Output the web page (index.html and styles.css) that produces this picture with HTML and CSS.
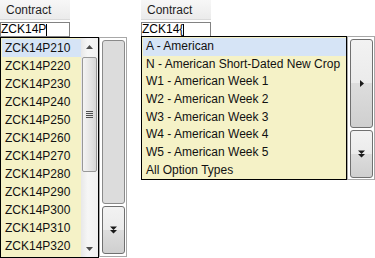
FILE: index.html
```html
<!DOCTYPE html>
<html lang="en">
<head>
  <meta charset="UTF-8" />
  <title>Contract picker</title>
  <link rel="stylesheet" href="styles.css">
</head>
<body>
  <div class="page">
    <div class="panel panel-left">
      <div class="hdr">Contract</div>
      <div class="field">ZCK14P<span class="caret"></span></div>
      <div class="drop">
        <div class="list list-tall">
          <div class="items">
            <div class="item sel">ZCK14P210</div>
            <div class="item">ZCK14P220</div>
            <div class="item">ZCK14P230</div>
            <div class="item">ZCK14P240</div>
            <div class="item">ZCK14P250</div>
            <div class="item">ZCK14P260</div>
            <div class="item">ZCK14P270</div>
            <div class="item">ZCK14P280</div>
            <div class="item">ZCK14P290</div>
            <div class="item">ZCK14P300</div>
            <div class="item">ZCK14P310</div>
            <div class="item">ZCK14P320</div>
          </div>
          <div class="vscroll">
            <div class="sb-arrow">
              <svg width="7" height="4" viewBox="0 0 7 4"><path d="M0 4 L3.5 0 L7 4Z" fill="#4d4d4d"/></svg>
            </div>
            <div class="sb-track">
              <div class="thumb"><span class="grip"></span></div>
            </div>
            <div class="sb-arrow">
              <svg width="7" height="4" viewBox="0 0 7 4"><path d="M0 0 L3.5 4 L7 0Z" fill="#4d4d4d"/></svg>
            </div>
          </div>
        </div>
        <div class="btns btns-tall">
          <div class="btn btn-flat btn-main"></div>
          <div class="btn btn-more">
            <svg width="7" height="8" viewBox="0 0 7 8"><path d="M0 0.5 H7 L3.5 4Z M0 4 H7 L3.5 7.5Z" fill="#1a1a1a"/></svg>
          </div>
        </div>
      </div>
    </div>

    <div class="panel panel-right">
      <div class="hdr">Contract</div>
      <div class="field">ZCK14{<span class="caret"></span></div>
      <div class="drop drop-up">
        <div class="list list-wide">
          <div class="items">
            <div class="item sel">A - American</div>
            <div class="item">N - American Short-Dated New Crop</div>
            <div class="item">W1 - American Week 1</div>
            <div class="item">W2 - American Week 2</div>
            <div class="item">W3 - American Week 3</div>
            <div class="item">W4 - American Week 4</div>
            <div class="item">W5 - American Week 5</div>
            <div class="item">All Option Types</div>
          </div>
        </div>
        <div class="btns btns-short">
          <div class="btn btn-main">
            <svg width="4" height="7" viewBox="0 0 4 7"><path d="M0 0 L4 3.5 L0 7Z" fill="#1a1a1a"/></svg>
          </div>
          <div class="btn btn-more">
            <svg width="7" height="8" viewBox="0 0 7 8"><path d="M0 0.5 H7 L3.5 4Z M0 4 H7 L3.5 7.5Z" fill="#1a1a1a"/></svg>
          </div>
        </div>
      </div>
    </div>
  </div>
</body>
</html>
```

FILE: styles.css
```css
body {
  margin: 0;
  background: #fff;
  font-family: "Liberation Sans", Arial, sans-serif;
  font-size: 12px;
  color: #111;
}

.page {
  display: flex;
  height: 258px;
  overflow: hidden;
}

.panel {
  display: flex;
  flex-direction: column;
}

.panel-right {
  margin-left: 14px;
}

.hdr {
  width: 64px;
  height: 19px;
  padding-left: 6px;
  line-height: 20px;
  background: linear-gradient(#f7f7f7, #ebebeb);
  border-bottom: 1px solid #dadada;
  color: #1e1e1e;
}

.field {
  width: 68px;
  height: 13px;
  margin-top: 2px;
  border: 1px solid #828282;
  line-height: 13px;
  background: #fff;
  color: #000;
  display: flex;
  align-items: center;
}

.caret {
  width: 1px;
  height: 12px;
  background: #000;
}

.drop {
  display: flex;
  align-items: flex-start;
}

.drop-up {
  margin-top: -1px;
}

.list {
  display: flex;
  border: 1px solid #000;
  background: #f5f2c7;
  padding: 1px 0 0 1px;
  overflow: hidden;
}

.list-tall {
  width: 96px;
  height: 218px;
}

.list-wide {
  width: 203px;
  height: 141px;
}

.items {
  flex: 1;
  min-width: 0;
}

.item {
  height: 18px;
  line-height: 18px;
  padding-left: 3px;
  white-space: nowrap;
}

.list-wide .item {
  height: 17.7px;
  line-height: 17.7px;
}

.item.sel {
  background: #d6e4f6;
}

.vscroll {
  width: 17px;
  margin-top: -1px;
  display: flex;
  flex-direction: column;
  background: linear-gradient(to right, #e8e8e8, #f6f6f6 40%, #f0f0f0);
}

.sb-arrow {
  height: 17px;
  display: flex;
  align-items: center;
  justify-content: center;
}

.sb-track {
  flex: 1;
  padding-top: 2px;
}

.thumb {
  width: 15px;
  margin-left: 1px;
  height: 115px;
  box-sizing: border-box;
  border: 1px solid #989898;
  border-radius: 2px;
  background: linear-gradient(to right, #f4f4f4, #e6e6e6 50%, #d6d6d6);
  display: flex;
  align-items: center;
  justify-content: center;
}

.grip {
  width: 7px;
  height: 7px;
  background: repeating-linear-gradient(#4f4f4f 0 1px, transparent 1px 2px);
}

.btns {
  width: 23px;
  border: 1px solid #a8a8a8;
  display: flex;
  flex-direction: column;
  gap: 2px;
  background: #fff;
}

.btns-tall {
  padding: 2px 1px 2px 2px;
}

.btns-short {
  padding: 2px 1px 1px 2px;
}

.btn {
  box-sizing: border-box;
  width: 23px;
  border: 1px solid #707070;
  border-radius: 3px;
  background: linear-gradient(#f2f2f2 0, #ebebeb 50%, #dddddd 50%, #cfcfcf);
  display: flex;
  align-items: center;
  justify-content: center;
}

.btn-flat {
  background: #dcdcdc;
  border-color: #8a8a8a;
}

.panel-left .btn-main {
  height: 164px;
}

.panel-left .btn-more {
  height: 48px;
}

.panel-right .btn-main {
  height: 89px;
}

.panel-right .btn-more {
  height: 48px;
}
```
